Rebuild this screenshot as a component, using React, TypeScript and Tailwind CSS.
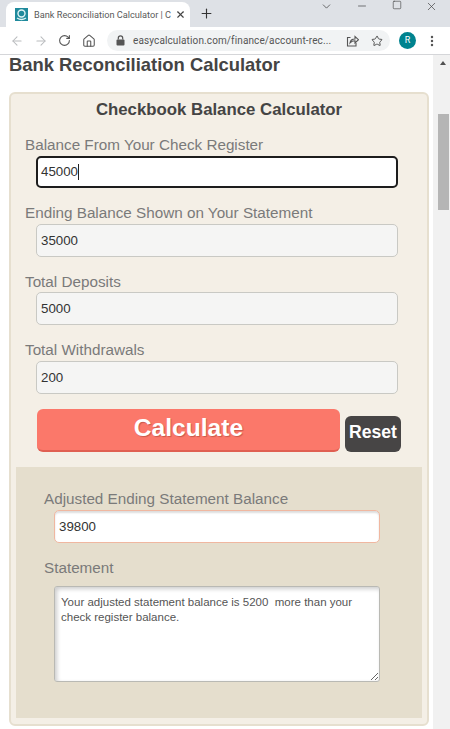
import { ArrowLeft, ArrowRight, ChevronDown, Home, Minus, MoreVertical, Plus, RotateCw, Square, Star, X } from "lucide-react"

const fields = [
  { label: "Balance From Your Check Register", value: "45000", rowClass: "mb-[16px]", inputClass: "mt-[2px]", focused: true },
  { label: "Ending Balance Shown on Your Statement", value: "35000", rowClass: "mb-[16px]", inputClass: "mt-[2px]" },
  { label: "Total Deposits", value: "5000", rowClass: "mb-[16px]", inputClass: "mt-px" },
  { label: "Total Withdrawals", value: "200", rowClass: "mb-0", inputClass: "mt-[2px]" },
]

function Favicon() {
  return (
    <svg width="13" height="13" viewBox="0 0 13 13" className="shrink-0">
      <rect width="13" height="13" fill="#1f8a9c" />
      <circle cx="6.5" cy="5.5" r="3.5" fill="none" stroke="#dff3f5" strokeWidth="1.4" />
      <path d="M2 10c3 2 6 2 9 0" fill="none" stroke="#dff3f5" strokeWidth="1.4" />
    </svg>
  )
}

function LockIcon() {
  return (
    <svg width="9" height="11" viewBox="0 0 9 11" className="shrink-0 text-[#555]">
      <rect x="0.5" y="4.5" width="8" height="6" rx="1" fill="currentColor" />
      <path d="M2.3 4.5V3a2.2 2.2 0 0 1 4.4 0v1.5" fill="none" stroke="currentColor" strokeWidth="1.2" />
    </svg>
  )
}

function ShareIcon() {
  return (
    <svg width="13" height="12" viewBox="0 0 13 12" className="ml-[8px] shrink-0 text-[#555]" fill="none" stroke="currentColor" strokeWidth="1.1">
      <path d="M4.5 2.5H1.5v8.5h8.5V8" />
      <path d="M4 8c.3-2.6 2-4 5-4V1.5l3.5 3.2L9 8V5.8C7 5.8 5.2 6.500 4 8z" />
    </svg>
  )
}

function BrowserChrome() {
  return (
    <div className="h-[55px] shrink-0 border-b border-[#d5d6d9] bg-white font-['Roboto',sans-serif] text-[#5f6368]">
      <div className="flex h-[27px] bg-[#dee1e6]">
        <div className="ml-[6px] mt-[2px] flex h-[25px] w-[184px] items-center rounded-t-[8px] bg-white pl-[9px] pr-[8px]">
          <Favicon />
          <span className="ml-[6px] flex-1 whitespace-nowrap text-[9.2px] text-[#5a5a5a]">Bank Reconciliation Calculator | C</span>
          <X size={11} strokeWidth={2.5} className="ml-1 shrink-0 text-[#444]" />
        </div>
        <Plus size={15} strokeWidth={1.8} className="ml-[9px] mt-[6px] text-[#333]" />
        <div className="ml-auto mr-px flex h-[11px] text-[#444]">
          <div className="flex w-[35px] justify-center"><ChevronDown size={13} strokeWidth={1.4} /></div>
          <div className="flex w-[35px] justify-center"><Minus size={12} strokeWidth={1.4} /></div>
          <div className="flex w-[35px] justify-center"><Square size={10} strokeWidth={1.5} /></div>
          <div className="flex w-[35px] justify-center"><X size={13} strokeWidth={1.3} /></div>
        </div>
      </div>
      <div className="flex h-[27px] items-center pl-[10px]">
        <ArrowLeft size={14} strokeWidth={1.8} className="text-[#b9bbbe]" />
        <ArrowRight size={14} strokeWidth={1.8} className="ml-[10px] text-[#b9bbbe]" />
        <RotateCw size={13} strokeWidth={2} className="ml-[10px] text-[#555]" />
        <Home size={14} strokeWidth={1.8} className="ml-[11px] text-[#555]" />
        <div className="ml-[11px] flex h-[21px] w-[283px] items-center rounded-full bg-[#f1f3f4] pl-[9px] pr-[7px]">
          <LockIcon />
          <span className="ml-[8px] flex-1 whitespace-nowrap text-[10px] tracking-[0.12px] text-[#555]">easycalculation.com/finance/account-rec...</span>
          <ShareIcon />
          <Star size={12} strokeWidth={1.8} className="ml-[12px] shrink-0 text-[#444]" />
        </div>
        <div className="ml-[9px] flex h-[17px] w-[17px] items-center justify-center rounded-full bg-[#00838f] text-[9px] text-white">R</div>
        <MoreVertical size={14} strokeWidth={2.2} className="ml-[9px] text-[#555]" />
      </div>
    </div>
  )
}

function Scrollbar() {
  return (
    <div className="flex w-[17px] shrink-0 flex-col items-end bg-[#f1f1f1] pr-px">
      <div className="mr-[3px] mt-[6px] h-0 w-0 border-x-[3px] border-b-[4px] border-x-transparent border-b-[#505050]" />
      <div className="mt-[49px] h-[96px] w-[11px] bg-[#b5b5b5]" />
    </div>
  )
}

export default function App() {
  return (
    <div className="flex h-[729px] w-[450px] flex-col overflow-hidden bg-white font-['Liberation_Sans',Arial,sans-serif]">
      <BrowserChrome />
      <div className="flex min-h-0 flex-1">
        <main className="w-[433px] pl-[9px]">
          <h1 className="text-[18.4px] font-bold leading-[20px] text-[#444]">Bank Reconciliation Calculator</h1>
          <section className="mt-[17px] h-[634px] w-[420px] rounded-[6px] border-2 border-[#e6dfcf] bg-[#f4efe6] px-[5px]">
            <h2 className="mt-[6px] text-center text-[16.8px] font-bold leading-[20px] text-[#444]">Checkbook Balance Calculator</h2>
            <div className="mt-[16px]">
              {fields.map((field) => (
                <div key={field.label} className={field.rowClass}>
                  <label className="ml-[9px] block text-[15.25px] leading-[18px] text-[#7a7a7a]">{field.label}</label>
                  {field.focused ? (
                    <div className={`ml-[20px] ${field.inputClass} flex h-[32px] w-[362px] items-center rounded-[5px] border-2 border-[#1d1d1d] bg-white px-[3px] text-[13.3px] text-[#333]`}>
                      {field.value}
                      <span className="h-[16px] w-px bg-[#222]" />
                    </div>
                  ) : (
                    <input
                      readOnly
                      value={field.value}
                      className={`ml-[20px] ${field.inputClass} block h-[33px] w-[362px] rounded-[5px] border border-[#c9c9c4] bg-[#f5f5f4] px-[4px] text-[13.3px] text-[#333]`}
                    />
                  )}
                </div>
              ))}
            </div>
            <div className="mt-[15px] flex items-end pl-[21px]">
              <button className="h-[43px] w-[303px] rounded-[6px] border-b-2 border-[#e05f52] bg-[#fb786a] pb-[2px] text-[24.6px] font-bold text-white [text-shadow:1px_1px_1px_#c9594d]">Calculate</button>
              <button className="ml-[5px] h-[36px] w-[56px] rounded-[6px] bg-[#474545] pb-[3px] text-[17.6px] font-bold text-white">Reset</button>
            </div>
            <div className="mt-[15px] h-[251px] bg-[#e5decd] pl-[28px] pt-[23px]">
              <label className="block text-[15.25px] leading-[18px] text-[#7a7a7a]">Adjusted Ending Statement Balance</label>
              <input
                readOnly
                value="39800"
                className="ml-[10px] mt-[2px] block h-[33px] w-[326px] rounded-[5px] border border-[#f0b7a0] bg-white px-[4px] text-[13.3px] text-[#333] shadow-[inset_0_2px_2px_#ddd]"
              />
              <label className="mt-[16px] block text-[15.25px] leading-[18px] text-[#7a7a7a]">Statement</label>
              <textarea
                readOnly
                value="Your adjusted statement balance is 5200  more than your check register balance."
                className="ml-[10px] mt-[9px] block h-[96px] w-[326px] rounded-[3px] border border-[#b9b9b4] bg-white px-[6px] py-[8px] text-[11.5px] leading-[15px] text-[#555] shadow-[inset_2px_2px_4px_#ccc]"
              />
            </div>
          </section>
        </main>
        <Scrollbar />
      </div>
    </div>
  )
}
